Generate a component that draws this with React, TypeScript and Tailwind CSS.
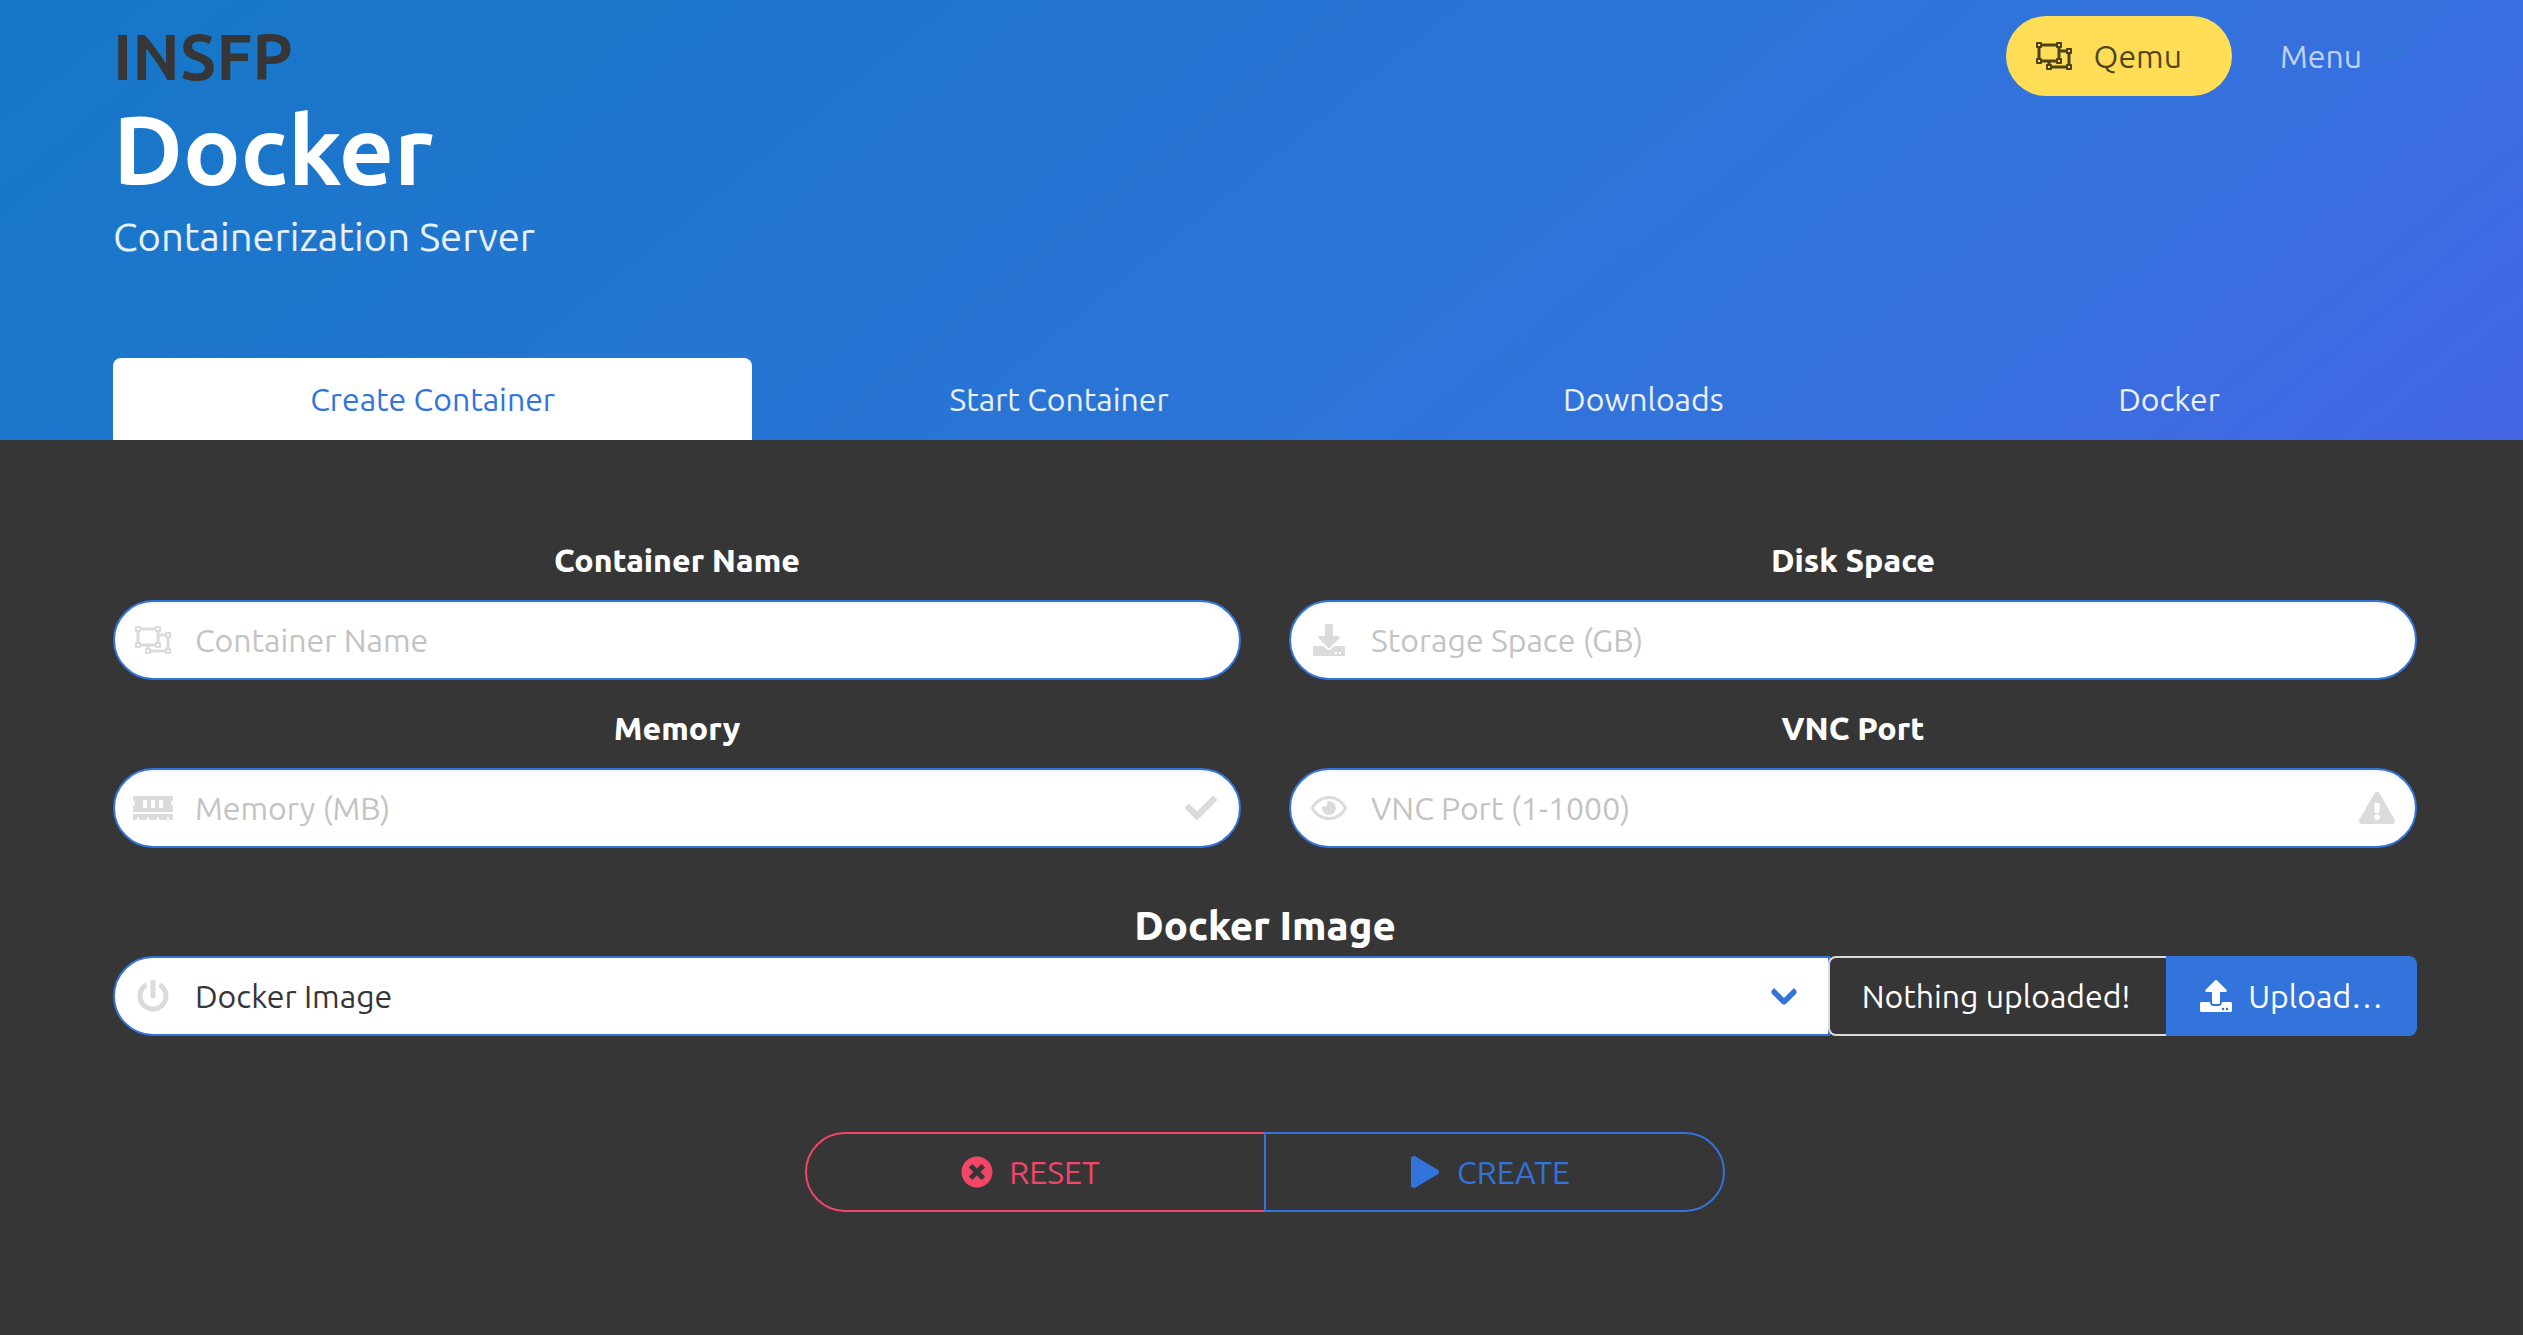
import React from "react";
import {
  FaCheck,
  FaDownload,
  FaExclamationTriangle,
  FaMemory,
  FaPlay,
  FaPowerOff,
  FaRegEye,
  FaRegObjectUngroup,
  FaTimesCircle,
  FaUpload,
} from "react-icons/fa";

type FieldProps = {
  id: string;
  label: string;
  placeholder: string;
  icon: React.ReactNode;
  status?: React.ReactNode;
};

function Field({ id, label, placeholder, icon, status }: FieldProps) {
  return (
    <div className="flex flex-col gap-4">
      <label htmlFor={id} className="text-center font-extrabold text-white">
        {label}
      </label>
      <div className="relative">
        <input
          id={id}
          type="text"
          placeholder={placeholder}
          className="h-20 w-full rounded-full border-2 border-[#3273dc] bg-white px-20 text-[#363636] shadow-[inset_0_2px_4px_rgba(10,10,10,0.05)] outline-none placeholder:text-[#c3c3c3]"
        />
        <span className="pointer-events-none absolute inset-y-0 left-0 flex w-20 items-center justify-center text-[#dbdbdb]">
          {icon}
        </span>
        {status && (
          <span className="pointer-events-none absolute inset-y-0 right-0 flex w-20 items-center justify-center text-[#dbdbdb]">
            {status}
          </span>
        )}
      </div>
    </div>
  );
}

const tabs = ["Create Container", "Start Container", "Downloads", "Docker"];

export default function App() {
  return (
    <div className="min-h-screen bg-[#363636] font-['Ubuntu','Noto_Sans',sans-serif] text-[32px] leading-[48px]">
      <header className="bg-[linear-gradient(141deg,#1577c6_0%,#3273dc_71%,#4366e5_100%)] pt-4 pr-[106px] pl-[113px]">
        <div className="flex items-start justify-between">
          <div className="pt-1">
            <p className="text-[64px] leading-[72px] font-semibold text-[#363636]">INSFP</p>
            <h1 className="mt-1 text-[96px] leading-[108px] font-semibold text-white">Docker</h1>
            <h2 className="mt-2 text-[40px] leading-[50px] text-white/90">Containerization Server</h2>
          </div>
          <nav className="flex items-center gap-12">
            <a href="#qemu" className="flex h-20 items-center rounded-full bg-[#ffdd57] pr-[50px] pl-6 text-black/70">
              <span className="mr-4 flex w-12 justify-center">
                <FaRegObjectUngroup className="h-8 w-9" />
              </span>
              Qemu
            </a>
            <button type="button" className="flex items-center gap-6 pr-3.5 text-white/70">
              Menu
              <span className="mb-3 h-[17px] w-[17px] -rotate-45 rounded-[4px] border-b-6 border-l-6 border-[#3273dc]" />
            </button>
          </nav>
        </div>
        <nav className="mt-24 flex">
          {tabs.map((tab, i) => (
            <a
              key={tab}
              href="#tab"
              className={
                i === 0
                  ? "flex h-[82px] flex-auto items-center justify-center rounded-t-lg bg-white text-[#3273dc]"
                  : "flex h-[82px] flex-auto items-center justify-center text-white/90"
              }
            >
              {tab}
            </a>
          ))}
        </nav>
      </header>

      <main className="pt-24 pr-[106px] pb-24 pl-[113px]">
        <form>
          <div className="grid grid-cols-2 gap-x-12 gap-y-6">
            <Field
              id="name"
              label="Container Name"
              placeholder="Container Name"
              icon={<FaRegObjectUngroup className="h-8 w-9" />}
            />
            <Field
              id="disk"
              label="Disk Space"
              placeholder="Storage Space (GB)"
              icon={<FaDownload className="h-8 w-8" />}
            />
            <Field
              id="memory"
              label="Memory"
              placeholder="Memory (MB)"
              icon={<FaMemory className="h-8 w-10" />}
              status={<FaCheck className="h-8 w-8" />}
            />
            <Field
              id="vnc"
              label="VNC Port"
              placeholder="VNC Port (1-1000)"
              icon={<FaRegEye className="h-8 w-9" />}
              status={<FaExclamationTriangle className="h-8 w-9" />}
            />
          </div>

          <label
            htmlFor="image"
            className="mt-[53px] mb-[5px] block text-center text-[40px] leading-[50px] font-extrabold text-white"
          >
            Docker Image
          </label>
          <div className="flex">
            <div className="relative flex-1">
              <select
                id="image"
                className="h-20 w-full appearance-none rounded-l-full border-2 border-[#3273dc] bg-white pr-20 pl-20 text-[#363636] outline-none"
              >
                <option>Docker Image</option>
              </select>
              <span className="pointer-events-none absolute inset-y-0 left-0 flex w-20 items-center justify-center text-[#dbdbdb]">
                <FaPowerOff className="h-8 w-8" />
              </span>
              <span className="pointer-events-none absolute top-[26px] right-9 h-5 w-5 -rotate-45 rounded-[4px] border-b-6 border-l-6 border-[#3273dc]" />
            </div>
            <label className="-ml-0.5 flex h-20 cursor-pointer">
              <input type="file" className="sr-only" />
              <span className="relative flex items-center rounded-l-lg border-2 border-r-0 border-[#dbdbdb] bg-[#363636] pr-9 pl-8 text-white">
                Nothing uploaded!
              </span>
              <span className="flex items-center gap-4 rounded-r-lg bg-[#3273dc] px-[34px] text-white">
                <FaUpload className="h-8 w-8" />
                Upload…
              </span>
            </label>
          </div>

          <div className="mx-auto mt-24 flex w-2/5 max-w-[920px]">
            <button
              type="reset"
              className="flex h-20 flex-1 items-center justify-center rounded-l-full border-2 border-[#f14668] text-[#f14668]"
            >
              <span className="mr-2 -ml-[18px] flex w-12 justify-center">
                <FaTimesCircle className="h-8 w-8" />
              </span>
              RESET
            </button>
            <button
              type="button"
              className="-ml-0.5 flex h-20 flex-1 items-center justify-center rounded-r-full border-2 border-[#3273dc] text-[#3273dc]"
            >
              <span className="mr-2 -ml-[18px] flex w-12 justify-center">
                <FaPlay className="h-8 w-7" />
              </span>
              CREATE
            </button>
          </div>
        </form>
      </main>
    </div>
  );
}
